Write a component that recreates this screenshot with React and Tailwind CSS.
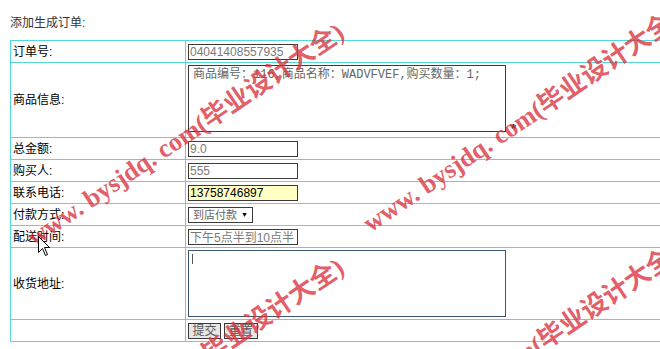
import React from 'react';

const sans = "font-['Liberation_Sans','Noto_Sans_CJK_SC',sans-serif]";

const Field = ({ value, className = 'bg-white text-[#7a7a7a]' }) => (
  <input
    readOnly
    value={value}
    className={`h-[16px] w-[110px] border border-[#3a3a3a] px-[1px] text-[12px] leading-[14px] outline-none ${sans} ${className}`}
  />
);

const Row = ({ label, h = 'h-[21px]', children }) => (
  <>
    <div className={`${h} flex items-center bg-white pl-[2px] text-[12px] text-black`}>{label}</div>
    <div className={`${h} flex items-center bg-white pl-[2px]`}>{children}</div>
  </>
);

// red diagonal watermark laid over the page
const Mark = ({ className }) => (
  <div
    className={`pointer-events-none absolute origin-left rotate-[-34deg] whitespace-nowrap text-[26px] leading-[28px] font-bold text-[#d9343f]/80 font-['Liberation_Serif','Noto_Sans_CJK_SC',serif] ${className}`}
  >
    www. bysjdq. com(毕业设计大全)
  </div>
);

export default function App() {
  return (
    <div className={`relative h-[349px] w-[660px] overflow-hidden bg-white ${sans}`}>
      <div className="pl-[10px] pt-[15px]">
        <div className="text-[12px] leading-[16px] text-[#333]">添加生成订单:</div>

        <div className="mt-[9px] grid w-[720px] grid-cols-[174px_1fr] gap-px bg-[#55d8d8] p-px">
          <Row label="订单号:">
            <Field value="04041408557935" />
          </Row>

          <Row label="商品信息:" h="h-[74px]">
            <div className="flex h-full items-start pt-[2px]">
              <textarea
                readOnly
                value="商品编号：116,商品名称：WADVFVEF,购买数量：1;"
                className="h-[67px] w-[318px] resize-none border border-[#3a3a3a] px-[4px] py-[2px] text-[12px] leading-[15px] text-[#666] outline-none font-['Liberation_Mono','Noto_Sans_CJK_SC',monospace]"
              />
              <span className="ml-[5px] mt-[58px] text-[13px] leading-[12px] font-bold text-black">*</span>
            </div>
          </Row>

          <Row label="总金额:">
            <Field value="9.0" />
          </Row>

          <Row label="购买人:">
            <Field value="555" />
          </Row>

          <Row label="联系电话:">
            <Field value="13758746897" className="bg-[#ffffc4] text-black" />
          </Row>

          <Row label="付款方式:">
            <div className="relative flex h-[16px] w-[65px] items-center border border-[#3a3a3a] bg-white pl-[4px] text-[11px] leading-[14px] text-[#666]">
              到店付款
              <span className="absolute right-[4px] top-[3px] text-[7px] leading-[8px] text-black">▼</span>
            </div>
          </Row>

          <Row label="配送时间:">
            <Field value="下午5点半到10点半" />
          </Row>

          <Row label="收货地址:" h="h-[71px]">
            <div className="relative">
              <textarea
                readOnly
                className="block h-[67px] w-[318px] resize-none border border-[#3b5670] outline-none"
              />
              <span className="absolute left-[4px] top-[4px] h-[10px] w-px bg-[#555]" />
            </div>
          </Row>

          <Row label="">
            <div className="flex gap-[3px]">
              <button className="h-[16px] w-[33px] border border-[#3a3a3a] bg-[#e6e6e6] p-0 text-[12px] leading-[14px] text-[#555]">提交</button>
              <button className="h-[16px] w-[34px] border border-[#3a3a3a] bg-[#e6e6e6] p-0 text-[12px] leading-[14px] text-[#555]">重置</button>
            </div>
          </Row>
        </div>
      </div>

      <Mark className="left-[30px] top-[226px]" />
      <Mark className="left-[366px] top-[212px]" />
      <Mark className="left-[30px] top-[461px]" />
      <Mark className="left-[366px] top-[447px]" />

      <svg className="absolute left-[38px] top-[236px]" width="13" height="21" viewBox="0 0 13 21">
        <path d="M0.5 0.5 L0.5 16.5 L4.5 12.5 L7.5 19.5 L9.5 18.5 L6.5 11.5 L11.5 11.5 Z" fill="#fff" stroke="#000" strokeWidth="1" />
      </svg>
    </div>
  );
}
